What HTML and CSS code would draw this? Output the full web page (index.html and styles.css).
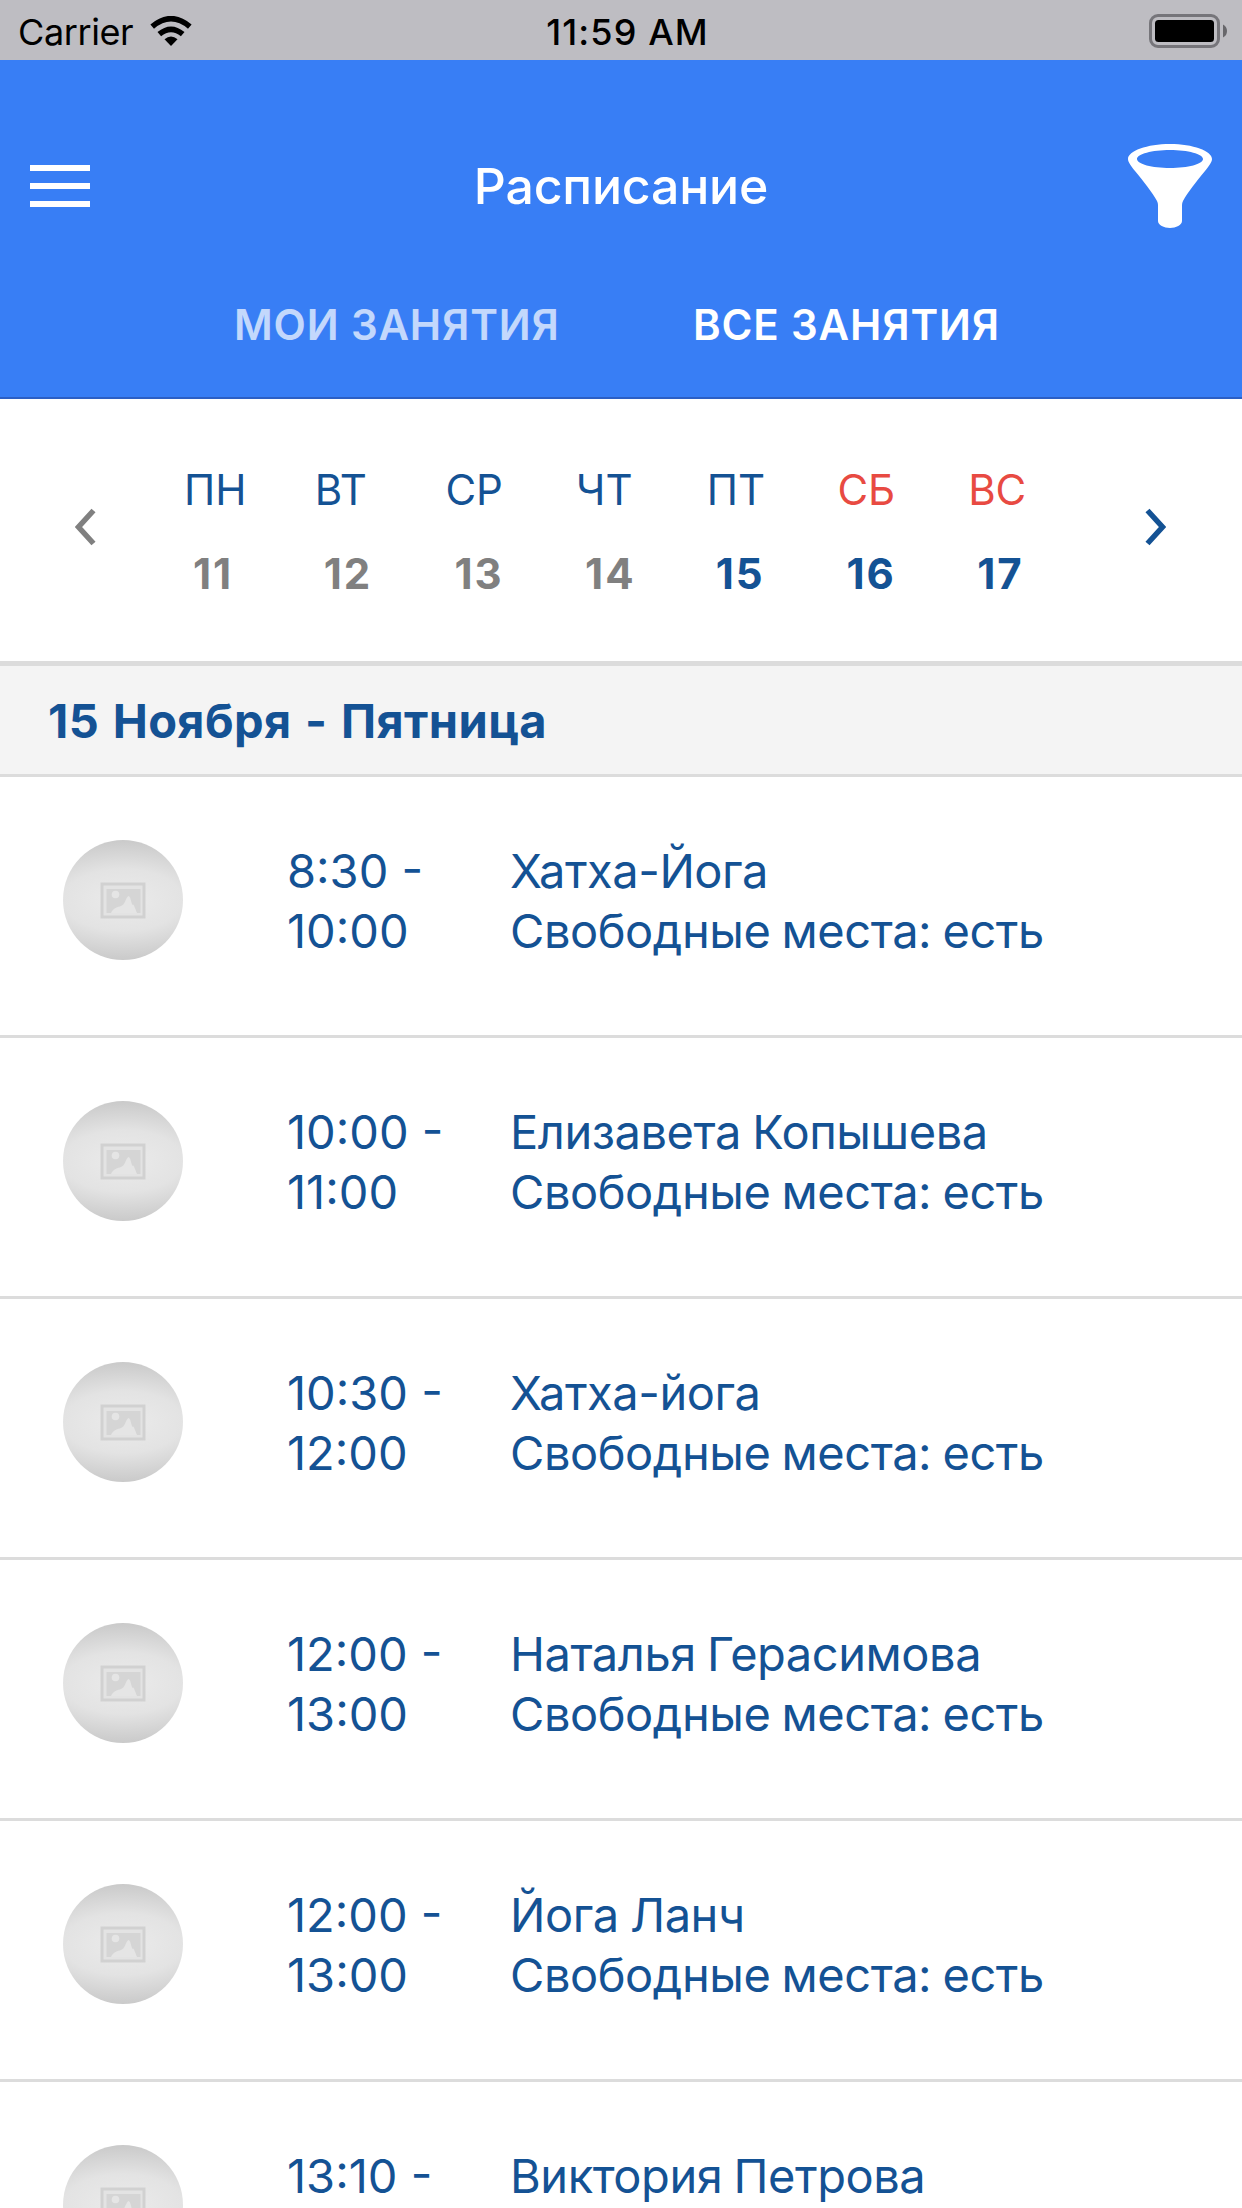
FILE: index.html
```html
<!DOCTYPE html>
<html lang="ru">
<head>
    <meta charset="UTF-8">
    <meta name="viewport" content="width=device-width, initial-scale=1.0">
    <title>Расписание</title>
    <link rel="stylesheet" href="styles.css">
</head>
<body>
    <!-- Shared placeholder for missing photos -->
    <svg class="sprite" aria-hidden="true">
        <symbol id="noPhoto" viewBox="0 0 46 38">
            <rect x="2" y="3" width="42" height="33" fill="#e3e3e3" stroke="#d1d1d1" stroke-width="3"/>
            <rect x="6.5" y="8" width="34" height="24" fill="#d5d5d5"/>
            <circle cx="15.5" cy="13.5" r="3.8" fill="#e5e5e5"/>
            <path d="M11 32C13 27 18 26 21 25C25 24 26 16 28.5 15C31 16 31 22 32.5 24C33.5 22 35 27 37 32z" fill="#e5e5e5"/>
        </symbol>
    </svg>

    <!-- Status bar -->
    <div class="status-bar">
        <div class="carrier">
            <span class="carrier-name">Carrier</span>
            <svg class="wifi" width="42" height="30" viewBox="0 0 42 30">
                <path d="M2.2 10.6Q21-5.2 39.8 10.6" fill="none" stroke="#000" stroke-width="5.6"/>
                <path d="M9.3 18.2Q21 8.4 32.7 18.2" fill="none" stroke="#000" stroke-width="5.6"/>
                <path d="M14.5 23.3Q21 17.9 27.5 23.3L21 30z"/>
            </svg>
        </div>
        <div class="clock">11:59 AM</div>
        <svg class="battery" width="78" height="34" viewBox="0 0 78 34">
            <rect x="1.5" y="1.5" width="68" height="31" rx="7.5" fill="none" stroke="#76757a" stroke-width="3"/>
            <rect x="6" y="6" width="59" height="22" rx="3.5"/>
            <path d="M74 10.5q4 2 4 6.5t-4 6.5z" fill="#68676b"/>
        </svg>
    </div>

    <!-- Header -->
    <header class="header">
        <div class="toolbar">
            <button class="icon-button">
                <svg width="60" height="42" viewBox="0 0 60 42">
                    <path d="M0 0h60v6H0zM0 18h60v6H0zM0 36h60v6H0z" fill="#fff"/>
                </svg>
            </button>
            <h1 class="title">Расписание</h1>
            <button class="icon-button">
                <svg width="84" height="84" viewBox="0 0 84 84">
                    <path fill="#fff" fill-rule="evenodd" d="M42 0C65 0 84 7 84 15C84 18 81 22 77 27C68 38 60 48 55 57Q54 59 54 61V77C54 81 48 84 42 84S30 81 30 77V61Q30 59 29 57C24 48 16 38 7 27C3 22 0 18 0 15C0 7 19 0 42 0zM42 6C24 6 9 10 9 15S24 24 42 24S75 20 75 15S60 6 42 6z"/>
                </svg>
            </button>
        </div>
        <nav class="tabs">
            <a class="tab tab-my">МОИ ЗАНЯТИЯ</a>
            <a class="tab tab-all active">ВСЕ ЗАНЯТИЯ</a>
        </nav>
    </header>

    <!-- Week -->
    <section class="week">
        <svg class="arrow arrow-prev" width="21" height="38" viewBox="0 0 21 38">
            <path d="M18.5 2.5L3.5 19L18.5 35.5"/>
        </svg>
        <div class="days">
            <div class="day past"><span class="day-name">ПН</span><b class="day-number">11</b></div>
            <div class="day past"><span class="day-name">ВТ</span><b class="day-number">12</b></div>
            <div class="day past"><span class="day-name">СР</span><b class="day-number">13</b></div>
            <div class="day past"><span class="day-name">ЧТ</span><b class="day-number">14</b></div>
            <div class="day"><span class="day-name">ПТ</span><b class="day-number">15</b></div>
            <div class="day weekend"><span class="day-name">СБ</span><b class="day-number">16</b></div>
            <div class="day weekend"><span class="day-name">ВС</span><b class="day-number">17</b></div>
        </div>
        <svg class="arrow arrow-next" width="21" height="38" viewBox="0 0 21 38">
            <path d="M2.5 2.5L17.5 19L2.5 35.5"/>
        </svg>
    </section>

    <!-- Schedule -->
    <h2 class="date-title">15 Ноября - Пятница</h2>
    <ul class="lessons">
        <li class="lesson">
            <div class="avatar"><svg width="46" height="38"><use href="#noPhoto"/></svg></div>
            <div class="time">8:30 -<br>10:00</div>
            <div class="info">Хатха-Йога<br>Свободные места: есть</div>
        </li>
        <li class="lesson">
            <div class="avatar"><svg width="46" height="38"><use href="#noPhoto"/></svg></div>
            <div class="time">10:00 -<br>11:00</div>
            <div class="info">Елизавета Копышева<br>Свободные места: есть</div>
        </li>
        <li class="lesson">
            <div class="avatar"><svg width="46" height="38"><use href="#noPhoto"/></svg></div>
            <div class="time">10:30 -<br>12:00</div>
            <div class="info">Хатха-йога<br>Свободные места: есть</div>
        </li>
        <li class="lesson">
            <div class="avatar"><svg width="46" height="38"><use href="#noPhoto"/></svg></div>
            <div class="time">12:00 -<br>13:00</div>
            <div class="info">Наталья Герасимова<br>Свободные места: есть</div>
        </li>
        <li class="lesson">
            <div class="avatar"><svg width="46" height="38"><use href="#noPhoto"/></svg></div>
            <div class="time">12:00 -<br>13:00</div>
            <div class="info">Йога Ланч<br>Свободные места: есть</div>
        </li>
        <li class="lesson">
            <div class="avatar"><svg width="46" height="38"><use href="#noPhoto"/></svg></div>
            <div class="time">13:10 -</div>
            <div class="info">Виктория Петрова</div>
        </li>
    </ul>
</body>
</html>
```
FILE: styles.css
```css
* {
    box-sizing: border-box;
}

body {
    margin: 0;
    height: 2208px;
    overflow: hidden;
    background-color: #fff;
    color: #145294;
    font-family: Inter, "Liberation Sans", sans-serif;
}

svg {
    display: block;
}

.sprite {
    display: none;
}

/* Status bar */
.status-bar {
    display: grid;
    grid-template-columns: 1fr auto 1fr;
    align-items: center;
    height: 60px;
    padding: 0 15px 0 18px;
    background-color: #bebdc2;
    color: #000;
    font-size: 36px;
    line-height: 60px;
}

.carrier {
    display: flex;
    align-items: center;
    gap: 17px;
}

.carrier-name {
    padding-top: 1px;
    letter-spacing: -0.4px;
}

.clock {
    padding-left: 10px;
    padding-top: 2px;
    font-weight: 500;
    letter-spacing: 1.1px;
}

.battery {
    justify-self: end;
}

/* Header */
.header {
    height: 339px;
    padding-top: 84px;
    background-color: #387ef5;
    border-bottom: 2px solid #2c5fc4;
    color: #fff;
}

.toolbar {
    display: grid;
    grid-template-columns: 84px 1fr 84px;
    align-items: center;
    height: 84px;
    margin: 0 30px;
}

.icon-button {
    padding: 0;
    border: none;
    background: none;
    cursor: pointer;
}

.title {
    margin: 0;
    font-size: 50px;
    font-weight: 500;
    letter-spacing: -0.2px;
    line-height: 84px;
    text-align: center;
}

.tabs {
    display: flex;
    margin-top: 66px;
    padding-left: 234px;
    font-size: 42px;
    font-weight: 600;
    letter-spacing: 0.85px;
    line-height: 61px;
}

.tab-my {
    width: 459px;
}

.tab {
    opacity: 0.7;
}

.tab.active {
    opacity: 1;
}

/* Week */
.week {
    display: flex;
    align-items: center;
    height: 267px;
    padding: 0 76px 7px 75px;
    border-bottom: 5px solid #dcdcdc;
}

.arrow path {
    fill: none;
    stroke: #145294;
    stroke-width: 5.5;
}

.arrow-prev path {
    stroke: #808080;
}

.days {
    display: grid;
    grid-template-columns: repeat(7, 130.7px);
    margin-left: 88px;
    margin-right: auto;
    padding-top: 10px;
    font-size: 42px;
    line-height: 60px;
}

.day {
    display: flex;
    flex-direction: column;
    gap: 24px;
}

.day-number {
    padding-left: 9px;
    letter-spacing: 2px;
}

.past .day-number {
    color: #808080;
}

.weekend .day-name {
    color: #e84a42;
}

/* Schedule */
.date-title {
    height: 111px;
    margin: 0;
    padding-left: 48px;
    background-color: #f4f4f4;
    border-bottom: 3px solid #dcdcdc;
    font-size: 47px;
    font-weight: 700;
    letter-spacing: 0.4px;
    line-height: 110px;
    word-spacing: 2px;
}

.lessons {
    margin: 0;
    padding: 0;
    list-style: none;
}

.lesson {
    display: grid;
    grid-template-columns: 224px 223px 1fr;
    height: 261px;
    padding: 63px 0 0 63px;
    border-bottom: 3px solid #dcdcdc;
    font-size: 47px;
    line-height: 60px;
}

/* the last visible row runs under the bottom edge */
.lesson:last-child {
    height: 128px;
    overflow: hidden;
    border-bottom: none;
}

.time,
.info {
    padding-top: 1px;
}

.info {
    letter-spacing: -0.45px;
    word-spacing: -1.5px;
}

.avatar {
    display: flex;
    align-items: center;
    justify-content: center;
    width: 120px;
    height: 120px;
    border-radius: 50%;
    background: radial-gradient(ellipse 120px 62px at center, #ebebeb 0%, #e3e3e3 50%, #c8c8c8 100%);
}
```
